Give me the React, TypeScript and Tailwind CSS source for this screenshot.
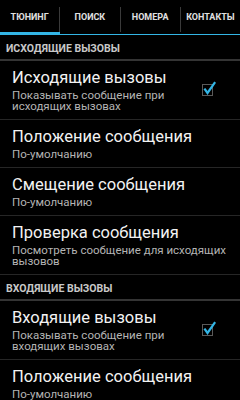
import React from 'react';

const tabs = ['ТЮНИНГ', 'ПОИСК', 'НОМЕРА', 'КОНТАКТЫ'];

interface PrefProps {
    title: string;
    summary: string;
    checked?: boolean;
}

function CheckBox() {
    return (
        <svg width="24" height="20" viewBox="0 0 24 20" className="shrink-0 mr-[15px]">
            <rect x="5.5" y="5.5" width="10" height="11" fill="none" stroke="#5a5a5a" strokeWidth="1" />
            <polyline
                points="8,10.5 10.5,14 17.5,4"
                fill="none"
                stroke="#33b5e5"
                strokeWidth="2.2"
                strokeLinecap="square"
            />
        </svg>
    );
}

function Pref({ title, summary, checked }: PrefProps) {
    return (
        <div className="flex items-center border-b border-[#262626] pl-[12px] pr-[4px] pt-[5px] pb-[7px]">
            <div className="flex-1 min-w-0">
                <div className="text-[16.5px] leading-[24px] text-[#f2f2f2]">{title}</div>
                <div className={`text-[11.5px] leading-[11px] text-[#b4b4b4] ${checked ? 'pr-[24px]' : ''}`}>
                    {summary}
                </div>
            </div>
            {checked && <CheckBox />}
        </div>
    );
}

function SectionHeader({ label }: { label: string }) {
    return (
        <div className="px-[6px] pt-[7px] pb-[4px] text-[10.5px] leading-[13px] font-bold text-[#c8c8c8] border-b-2 border-[#343434]">
            {label}
        </div>
    );
}

export default function App() {
    return (
        <div className="w-[240px] h-[400px] overflow-hidden bg-black font-['Roboto',sans-serif]">
            <div className="flex h-[32px]">
                {tabs.map((t, i) => (
                    <React.Fragment key={t}>
                        {i > 0 && <div className="w-px h-[25px] self-center mt-[6px] bg-[#3a3a3a]" />}
                        <div className="flex-1 flex items-center justify-center pt-[4px] text-[9px] font-bold text-[#e0e0e0]">
                            {t}
                        </div>
                    </React.Fragment>
                ))}
            </div>
            <div className="flex h-[3px]">
                <div className="w-[60px] bg-[#33b5e5]" />
                <div className="flex-1 border-b border-[#33b5e5]" />
            </div>

            <SectionHeader label="ИСХОДЯЩИЕ ВЫЗОВЫ" />
            <Pref title="Исходящие вызовы" summary="Показывать сообщение при исходящих вызовах" checked />
            <Pref title="Положение сообщения" summary="По-умолчанию" />
            <Pref title="Смещение сообщения" summary="По-умолчанию" />
            <Pref title="Проверка сообщения" summary="Посмотреть сообщение для исходящих вызовов" />

            <SectionHeader label="ВХОДЯЩИЕ ВЫЗОВЫ" />
            <Pref title="Входящие вызовы" summary="Показывать сообщение при входящих вызовах" checked />
            <Pref title="Положение сообщения" summary="По-умолчанию" />
        </div>
    );
}
